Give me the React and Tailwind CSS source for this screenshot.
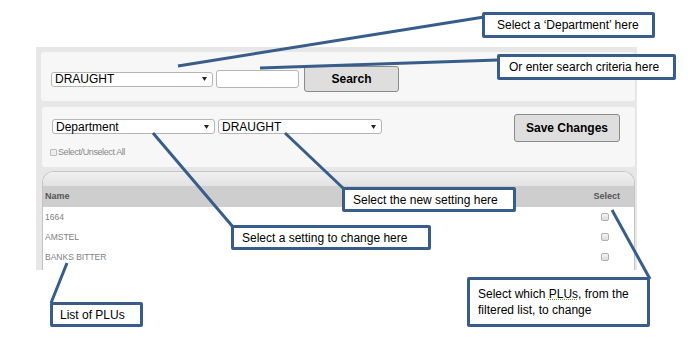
import React from "react";

const Arrow = () => (
  <svg width="5" height="4" viewBox="0 0 5 4" className="shrink-0">
    <path d="M0 0 L5 0 L2.5 4 Z" fill="#222" />
  </svg>
);

const Select = ({ label, w, h = "h-[15px]" }) => (
  <div
    className={`${w} ${h} bg-white border border-[#b5b5b5] rounded-[3px] flex items-center justify-between pl-[3px] pr-[5px] text-[12px] leading-none text-black`}
  >
    <span>{label}</span>
    <Arrow />
  </div>
);

const Check = () => (
  <div className="w-[8px] h-[8px] rounded-[2px] border border-[#b0b0b0] bg-gradient-to-b from-[#f4f4f4] to-[#dcdcdc]" />
);

const Callout = ({ className, children }) => (
  <div
    className={`absolute border-[3px] border-[#385d8a] rounded-[2px] bg-white text-[12px] text-black leading-[16px] ${className}`}
  >
    {children}
  </div>
);

export default function App() {
  const rows = ["1664", "AMSTEL", "BANKS BITTER"];
  return (
    <div
      className="relative w-[691px] h-[338px] bg-white overflow-hidden pt-[47px] pl-[36px]"
      style={{ fontFamily: '"Liberation Sans", Arial, sans-serif' }}
    >
      {/* UI */}
      <div className="w-[601px] h-[223px] bg-[#e7e7e7] overflow-hidden pl-[5px] pr-[2px] pt-[5px] flex flex-col">
        {/* search box */}
        <div className="h-[49px] bg-[#f7f7f7] rounded-[3px] flex items-center pt-[5px] pl-[10px] shrink-0">
          <Select label="DRAUGHT" w="w-[162px]" />
          <div className="ml-[3px] w-[83px] h-[18px] bg-white border border-[#b5b5b5] rounded-[3px]" />
          <div className="ml-[5px] w-[95px] h-[26px] bg-[#dedede] border border-[#8a8a8a] rounded-[3px] flex items-center justify-center text-[12px] font-bold text-black">
            Search
          </div>
        </div>
        {/* settings box */}
        <div className="mt-[6px] ml-[1px] h-[60px] bg-[#f7f7f7] rounded-[3px] flex justify-between shrink-0">
          <div className="pl-[10px] pt-[12px] flex flex-col">
            <div className="flex gap-[3px]">
              <Select label="Department" w="w-[163px]" />
              <Select label="DRAUGHT" w="w-[164px]" />
            </div>
            <div className="mt-[14px] -ml-[2px] flex items-center gap-[1px] text-[9px] leading-none text-[#888] tracking-[-0.4px]">
              <div className="w-[7px] h-[7px] border border-[#bbb] rounded-[1px] bg-[#eee]" />
              <span>Select/Unselect All</span>
            </div>
          </div>
          <div className="pt-[7px] pr-[15px]">
            <div className="w-[106px] h-[28px] bg-[#dedede] border border-[#8a8a8a] rounded-[3px] flex items-center justify-center text-[12px] font-bold text-black">
              Save Changes
            </div>
          </div>
        </div>
        {/* table */}
        <div className="mt-[4px] ml-[1px] flex-1 bg-white border border-b-0 border-[#c4c4c4] rounded-t-[12px] overflow-hidden">
          <div className="h-[14px] bg-gradient-to-b from-[#f0f0f0] to-[#e2e2e2]" />
          <div className="h-[21px] bg-[#cecece] flex items-center justify-between pl-[2px] pr-[14px] text-[9px] font-bold text-[#555]">
            <span>Name</span>
            <span>Select</span>
          </div>
          {rows.map((r) => (
            <div
              key={r}
              className="h-[20px] flex items-center justify-between pl-[2px] pr-[25px] text-[8.5px] text-[#808080]"
            >
              <span>{r}</span>
              <Check />
            </div>
          ))}
        </div>
      </div>

      {/* leader lines */}
      <svg
        className="absolute left-0 top-0 pointer-events-none"
        width="691"
        height="338"
        viewBox="0 0 691 338"
      >
        <g stroke="#385d8a" strokeWidth="3" fill="none" strokeLinecap="butt">
          <line x1="178" y1="66" x2="484" y2="17" />
          <line x1="260" y1="68" x2="498" y2="60" />
          <line x1="285" y1="133" x2="344" y2="189" />
          <line x1="153" y1="133" x2="233" y2="227" />
          <line x1="67" y1="263" x2="51" y2="303" />
          <line x1="612" y1="210" x2="650" y2="279" />
        </g>
      </svg>

      {/* callouts */}
      <Callout className="left-[482px] top-[12px] w-[173px] h-[26px] pl-[12px] flex items-center">
        Select a ‘Department’ here
      </Callout>
      <Callout className="left-[497px] top-[54px] w-[179px] h-[26px] pl-[9px] flex items-center">
        Or enter search criteria here
      </Callout>
      <Callout className="left-[342px] top-[187px] w-[174px] h-[25px] pl-[8px] flex items-center">
        Select the new setting here
      </Callout>
      <Callout className="left-[231px] top-[225px] w-[200px] h-[25px] pl-[8px] flex items-center">
        Select a setting to change here
      </Callout>
      <Callout className="left-[50px] top-[302px] w-[93px] h-[25px] pl-[7px] flex items-center">
        List of PLUs
      </Callout>
      <Callout className="left-[467px] top-[277px] w-[183px] h-[50px] pl-[8px] pt-[6px]">
        <p>
          Select which <span className="underline decoration-dotted decoration-[#5a9a3a]">PLUs</span>, from the
          filtered list, to change
        </p>
      </Callout>
    </div>
  );
}
